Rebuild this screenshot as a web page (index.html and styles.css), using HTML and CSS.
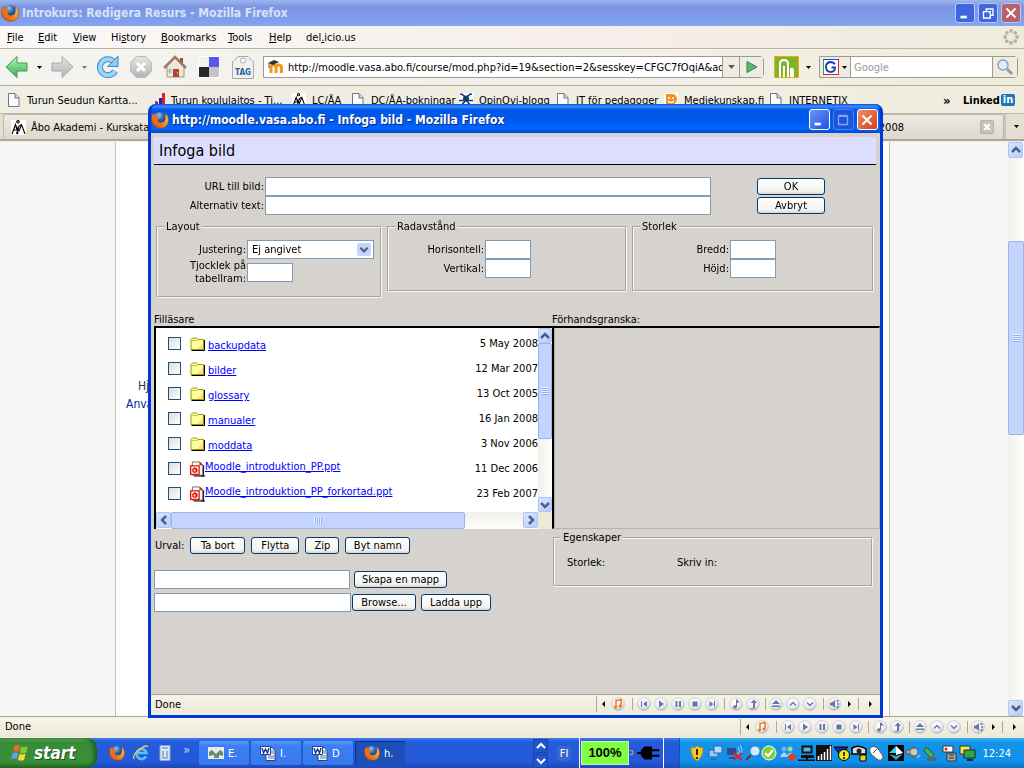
FILE: index.html
```html
<!DOCTYPE html>
<html lang="sv">
<head>
<meta charset="utf-8">
<title>Infoga bild</title>
<link rel="stylesheet" href="styles.css">
</head>
<body>
<svg class="defs" aria-hidden="true">
  <defs>
    <linearGradient id="gGreen" x1="0" y1="0" x2="0" y2="1"><stop offset="0" stop-color="#c9f2cf"/><stop offset=".5" stop-color="#6fd183"/><stop offset="1" stop-color="#3fae58"/></linearGradient>
    <linearGradient id="gGrey" x1="0" y1="0" x2="0" y2="1"><stop offset="0" stop-color="#e4e4e4"/><stop offset="1" stop-color="#b4b4b4"/></linearGradient>
    <radialGradient id="gBall" cx=".45" cy=".35" r=".65"><stop offset="0" stop-color="#fff"/><stop offset=".7" stop-color="#e9eaf0"/><stop offset="1" stop-color="#a9acb8"/></radialGradient>
    <radialGradient id="gGlobe" cx=".4" cy=".3" r=".8"><stop offset="0" stop-color="#8cc8f4"/><stop offset=".5" stop-color="#2c68b8"/><stop offset="1" stop-color="#123070"/></radialGradient>
    <linearGradient id="gFox" x1="1" y1="0" x2="0" y2="1"><stop offset="0" stop-color="#fbd850"/><stop offset=".5" stop-color="#f08820"/><stop offset="1" stop-color="#c84410"/></linearGradient>
  </defs>
  <symbol id="firefox" viewBox="0 0 16 16"><path d="M1 3Q.2 6 .6 9 2 15 8.500 15.500 15 15 15.600 8.500 15.700 4.500 12.500 1.500L13 4Q9 0 4 2.500Z" fill="url(#gFox)" stroke="#a84010" stroke-width=".5"/><circle cx="8" cy="5.800" r="5" fill="url(#gGlobe)"/><path d="M1 3 3 4Q5 3.500 6 5L8 6 6 7.500Q5.500 9 7 10 9 10.500 10.500 9.500 9.500 12.500 6 12 2 10.500 1.500 7Z" fill="#e8701c"/></symbol>
  <symbol id="page" viewBox="0 0 14 14"><path d="M1.500.5H8l4 4v9H1.500Z" fill="#fafcff" stroke="#6d7784"/><path d="M8 .5V5h4" fill="#cdd8e6" stroke="#6d7784"/></symbol>
  <symbol id="aa" viewBox="0 0 15 15"><path fill="#fff" d="M0 0h15v15H0z"/><g fill="none" stroke="#000" stroke-width="1.100"><circle cx="7" cy="1.800" r="1.200"/><path d="M1 14 4.500 4.500 7 14M5.500 14 8 6 10.500 4.500 14 14M4.500 5 8 11 10.500 5M2 10h3"/></g></symbol>
  <symbol id="ppt" viewBox="0 0 16 16"><path d="M2.500.5h8l3 3v11h-11Z" fill="#fff" stroke="#666"/><path d="M10 0v4h4Z" fill="#d02020"/><path d="M4 15.500h10.500V4M12 15.500h4" fill="none" stroke="#000"/><path d="M.7 4.700h9v9h-9Z" fill="#fff" stroke="#e01000" stroke-width="1.400"/><circle cx="5.200" cy="9.200" r="2.200" fill="none" stroke="#e01000" stroke-width="1.400"/><path d="M5.200 9.200V6.500M5.200 9.200h2.500" stroke="#e01000" fill="none"/></symbol>
  <symbol id="folder" viewBox="0 0 15 14"><path d="M1 12.500V2.500L2.500 1H6.500L8 2.500H13.500V12.500Z" fill="#ffff9c" stroke="#9a9a00"/><path d="M1.500 13.500H14.500V3" fill="none" stroke="#000"/><path d="M7 12 13 6v6Z" fill="#ffd08c" opacity=".8"/><path d="M2 3.500H8" stroke="#c8c860"/></symbol>
  <symbol id="word" viewBox="0 0 16 16"><path d="M6 2.500h6l3 3v10H6Z" fill="#fff" stroke="#345"/><path d="M11 6h3M11 8h3M8 11h6M8 13h6" stroke="#4a6cb0"/><path d="M.5 1.500h10v8H.5Z" fill="#fff" stroke="#2244a0"/><path d="m2 3 1.500 5 2-4 2 4L9 3" fill="none" stroke="#1a3890" stroke-width="1.400"/></symbol>
  <symbol id="up" viewBox="0 0 10 10"><path d="m1 7 4-4 4 4" fill="none" stroke="#4d6185" stroke-width="2.500"/></symbol>
  <symbol id="down" viewBox="0 0 10 10"><path d="m1 3 4 4 4-4" fill="none" stroke="#4d6185" stroke-width="2.500"/></symbol>
  <symbol id="left" viewBox="0 0 10 10"><path d="M7 1 3 5l4 4" fill="none" stroke="#4d6185" stroke-width="2.500"/></symbol>
  <symbol id="right" viewBox="0 0 10 10"><path d="m3 1 4 4-4 4" fill="none" stroke="#4d6185" stroke-width="2.500"/></symbol>
  <symbol id="tri" viewBox="0 0 5 3"><path d="M0 0h5L2.500 3Z" fill="#000"/></symbol>
  <symbol id="media" viewBox="0 0 280 18">
    <path d="M11 6v6L8 9ZM254 6v6l3-3ZM275 6v6l3-3Z"/>
    <path d="M2.500 1v16M38.500 3v12M130.500 3v12M171.500 3v12M229.500 3v12M264.500 3v12" stroke="#aca899"/>
    <g fill="url(#gBall)" stroke="#c4c4cc" stroke-width=".6"><circle cx="24" cy="9" r="6.500"/><circle cx="50" cy="9" r="6.500"/><circle cx="67" cy="9" r="6.500"/><circle cx="84" cy="9" r="6.500"/><circle cx="101" cy="9" r="6.500"/><circle cx="118" cy="9" r="6.500"/><circle cx="142" cy="9" r="6.500"/><circle cx="159" cy="9" r="6.500"/><circle cx="182" cy="9" r="6.500"/><circle cx="199" cy="9" r="6.500"/><circle cx="216" cy="9" r="6.500"/><circle cx="240" cy="9" r="6.500"/></g>
    <path d="M22 12V5.500l5-1V11" fill="none" stroke="#f07818" stroke-width="1.500"/><circle cx="21.500" cy="12" r="1.600" fill="#f07818"/><circle cx="26" cy="11" r="1.600" fill="#f07818"/>
    <g fill="#64789a"><path d="M47 6h1v6h-1ZM53 6v6l-4-3ZM65 5.500v7l5-3.500ZM81.500 6h2v6h-2ZM85 6h2v6h-2ZM98.500 6.500h5v5h-5ZM115.500 6v6l4-3ZM120 6h1v6h-1ZM142 4.500h1l3 3h-3V12h-1Z"/><circle cx="141" cy="12" r="1.800"/><path d="M156 13h3V8h-2.500L160 4.500 163 8h-2v5l-3 1ZM182 5l4 4h-8ZM178 10.500h8V12h-8ZM236 7.500h2l3-2.500v8l-3-2.500h-2Z"/></g>
    <path d="m196 10.500 3-3 3 3M213 7.500l3 3 3-3M242.500 6.500l2-1M243 9h2M242.500 11.500l2 1" fill="none" stroke="#64789a" stroke-width="1.400"/>
  </symbol>
</svg>

<div class="desktop">
  <section class="browser">
    <header class="titlebar titlebar-idle">
      <svg class="i18"><use href="#firefox"/></svg>
      <h1 class="title">Introkurs: Redigera Resurs - Mozilla Firefox</h1>
      <div class="win-buttons">
        <button class="wb" aria-label="Minimera"><svg viewBox="0 0 20 20"><path d="M5 14.500h7" stroke="#fff" stroke-width="3"/></svg></button>
        <button class="wb" aria-label="Återställ"><svg viewBox="0 0 20 20"><path d="M8 8V5.500h7.500v7H13M5 8.500h7.500v7H5Z" fill="none" stroke="#fff" stroke-width="1.500"/></svg></button>
        <button class="wb wb-close-idle" aria-label="Stäng"><svg viewBox="0 0 20 20"><path d="m5 5 10 10M15 5 5 15" stroke="#fff" stroke-width="2"/></svg></button>
      </div>
    </header>
    <nav class="menu">
      <a href="#"><u>F</u>ile</a><a href="#"><u>E</u>dit</a><a href="#"><u>V</u>iew</a><a href="#">Hi<u>s</u>tory</a><a href="#"><u>B</u>ookmarks</a><a href="#"><u>T</u>ools</a><a href="#"><u>H</u>elp</a><a href="#">del<u>.</u>icio.us</a>
      <svg class="throbber" viewBox="0 0 16 16"><g fill="#b4b2ae"><circle cx="8" cy="2" r="1.900"/><circle cx="12.200" cy="3.800" r="1.900"/><circle cx="14" cy="8" r="1.900"/><circle cx="12.200" cy="12.200" r="1.900"/><circle cx="8" cy="14" r="1.900"/><circle cx="3.800" cy="12.200" r="1.900"/><circle cx="2" cy="8" r="1.900"/><circle cx="3.800" cy="3.800" r="1.900"/></g></svg>
    </nav>
    <div class="tools">
      <button class="tool" aria-label="Back"><svg class="i24" viewBox="0 0 24 24"><path d="M1 12 12 1.500V8h10v8H12v6.500Z" fill="url(#gGreen)" stroke="#3c9c50"/></svg></button>
      <svg class="caret"><use href="#tri"/></svg>
      <button class="tool" aria-label="Forward"><svg class="i24" viewBox="0 0 24 24"><path d="M23 12 12 1.500V8H2v8h10v6.500Z" fill="url(#gGrey)" stroke="#aaa"/></svg></button>
      <svg class="caret faded"><use href="#tri"/></svg>
      <div class="toolset">
      <button class="tool" aria-label="Reload"><svg class="i24" viewBox="0 0 24 24"><path d="M20 16a8 8 0 1 1-2-10" fill="none" stroke="#3c8cc8" stroke-width="6"/><path d="M20 16a8 8 0 1 1-2-10" fill="none" stroke="#9cd4f8" stroke-width="4"/><path d="M23 1v10.500H12.500Z" fill="#8ccaf4" stroke="#3c8cc8"/></svg></button>
      <button class="tool" aria-label="Stop"><svg class="i24" viewBox="0 0 24 24"><path d="M7.500 1.500h9l6 6v9l-6 6h-9l-6-6v-9Z" fill="url(#gGrey)" stroke="#bbb"/><path d="m8 8 8 8m0-8-8 8" stroke="#fff" stroke-width="3"/></svg></button>
      <button class="tool" aria-label="Home"><svg class="i24" viewBox="0 0 24 24"><path d="M17 3h3v6h-3Z" fill="#9a5040"/><path d="M4 11v11h17V11L12 3Z" fill="#f2e6dc" stroke="#a89080"/><path d="M1 13 12 2l11 11" fill="none" stroke="#a07868" stroke-width="2.500"/><path d="M10 14h6v8h-6Z" fill="#a84838"/><path d="M5.500 14h3v4h-3Z" fill="#b0bcc8"/><circle cx="14.500" cy="18" r=".8" fill="#ffe000"/></svg></button>
      <button class="tool" aria-label="del.icio.us"><svg class="i24" viewBox="0 0 24 24"><path d="M1 1h22v22H1Z" fill="#fff"/><path d="M2 2h10v10H2Z" fill="#f2f2f2"/><path d="M12 2h10v10H12Z" fill="#5656f0"/><path d="M2 12h10v10H2Z" fill="#282828"/><path d="M12 12h10v10H12Z" fill="#c4c4c4"/></svg></button>
      <button class="tool tag" aria-label="Tag"><svg class="i24" viewBox="0 0 24 24"><path d="M1.500 23.500V7L7 1.500h10L22.500 7v16.500Z" fill="#f0f0f0" stroke="#aaa"/><circle cx="12" cy="5.500" r="2.500" fill="#fff" stroke="#aaa"/></svg><span>TAG</span></button>
      </div>
      <div class="urlbox">
        <svg class="i18" viewBox="0 0 18 18"><path d="M4 15V9q0-2 2.300-2T9 9v6M9 9q0-2 2.500-2T14.500 9v6" fill="none" stroke="#f5961e" stroke-width="3"/><path d="m1 5 6-3 5 2-6 3Z" fill="#333"/><path d="M2 5v5" stroke="#555"/></svg>
        <input class="field-plain" aria-label="Adress" value="http://moodle.vasa.abo.fi/course/mod.php?id=19&amp;section=2&amp;sesskey=CFGC7fOqiA&amp;add=resource">
        <button class="drop" aria-label="Visa adresser"><svg class="caret big"><use href="#tri"/></svg></button>
        <button class="go" aria-label="Go"><svg viewBox="0 0 14 14"><path d="M2 1.500 12 7 2 12.500Z" fill="#5cb870" stroke="#2c8444"/></svg></button>
      </div>
      <button class="tool" aria-label="Nätverk"><svg class="i25" viewBox="0 0 25 22"><path d="M.5.5h24v21H.5Z" fill="#82b428" stroke="#f5a81e"/><path d="M6 21V8q0-4 4-4t4 4v13M10 21V10M17 21v-8q2-1 2 2v6" fill="none" stroke="#fff" stroke-width="2"/></svg></button>
      <svg class="caret"><use href="#tri"/></svg>
      <div class="searchbox">
        <button class="engine" aria-label="Sökmotor"><svg viewBox="0 0 16 16"><path d="M0 0h16v16H0Z" fill="#fff"/><path d="M.5 0v16" stroke="#24a848"/><path d="M15.500 0v16M0 15.500h16" stroke="#e02828"/><path d="M0 .5h16" stroke="#2050c8"/><path d="M12 5Q10 3 7.500 3 3 3.500 3 8t4.500 5q4.500 0 4.500-4.500H8.500" fill="none" stroke="#2038b0" stroke-width="1.800"/></svg><svg class="caret"><use href="#tri"/></svg></button>
        <input class="field-plain" aria-label="Sök" placeholder="Google">
        <button class="mag" aria-label="Sök"><svg viewBox="0 0 18 18"><circle cx="7" cy="7" r="5" fill="#dcf0fa" stroke="#8aa4b8" stroke-width="1.500"/><path d="m11 11 5 5" stroke="#a8988c" stroke-width="3"/></svg></button>
      </div>
    </div>
    <nav class="bookmarks">
      <a href="#"><svg><use href="#page"/></svg>Turun Seudun Kartta...</a>
      <a href="#"><svg viewBox="0 0 14 14"><path d="M1 14v-2h2v2M4 14V8h2v6M11 14V0h3v14" fill="#e02020"/><path d="M6 14V9h1v5M8 14V5h3v9" fill="#1828c0"/></svg>Turun koululaitos - Ti...</a>
      <a href="#"><svg><use href="#aa"/></svg>LC/ÅA</a>
      <a href="#"><svg><use href="#page"/></svg>DC/ÅA-bokningar</a>
      <a href="#"><svg viewBox="0 0 14 14"><path d="M0 0h14v14H0Z" fill="#fff"/><circle cx="7" cy="5.500" r="3" fill="#123c70"/><path d="M1 1q4 0 6 5 2-5 6-5M2 13l5-6 5 6M0 7.500h14" fill="none" stroke="#123c70" stroke-width="1.600"/></svg>OpinOvi-blogg</a>
      <a href="#"><svg><use href="#page"/></svg>IT för pedagoger</a>
      <a href="#"><svg viewBox="0 0 14 14"><path d="M0 0h14v14H0Z" fill="#fff"/><path d="M2 1h7q4 1 4 5t-5 6l-6 1Z" fill="#f39022"/><path d="M4 8q3 3 6 0" fill="none" stroke="#fff" stroke-width="1.500"/><path d="M5 4v2M9 4v2" stroke="#fff" stroke-width="1.500"/></svg>Mediekunskap.fi</a>
      <a href="#"><svg><use href="#page"/></svg>INTERNETIX</a>
      <b class="more">»</b>
      <a class="linkedin" href="#"><b>Linked</b><i>in</i></a>
    </nav>
    <div class="tabs">
      <button class="tab"><svg><use href="#aa"/></svg>Åbo Akademi - Kurskatalog</button>
      <button class="tab tab-last"><span>2008</span><svg class="tab-close" viewBox="0 0 13 13"><rect x=".5" y=".5" width="12" height="12" rx="2" fill="#c8c4bc" stroke="#b4b0a6"/><path d="m4 4 5 5m0-5L4 9" stroke="#fff" stroke-width="2"/></svg></button>
      <button class="tab-list" aria-label="Flikar"><svg class="caret"><use href="#tri"/></svg></button>
    </div>
    <main class="content">
      <div class="side"></div>
      <div class="doc"><p>Hjälp</p><p><a href="#">Användare</a></p></div>
      <div class="side side-right"></div>
      <div class="vbar">
        <button class="sb" aria-label="Upp"><svg><use href="#up"/></svg></button>
        <div class="track-main"><div class="thumb"><span class="grip"></span></div></div>
        <button class="sb" aria-label="Ned"><svg><use href="#down"/></svg></button>
      </div>
    </main>
    <footer class="status"><span>Done</span><svg class="media"><use href="#media"/></svg></footer>
  </section>

  <section class="dialog">
    <header class="titlebar titlebar-active">
      <svg class="i18"><use href="#firefox"/></svg>
      <h2 class="title">http://moodle.vasa.abo.fi - Infoga bild - Mozilla Firefox</h2>
      <div class="win-buttons">
        <button class="wb wb-active" aria-label="Minimera"><svg viewBox="0 0 20 20"><path d="M5 14.500h7" stroke="#fff" stroke-width="3"/></svg></button>
        <button class="wb wb-off" aria-label="Maximera"><svg viewBox="0 0 20 20"><path d="M5 6h10v9H5ZM5 5h10" fill="none" stroke="#86a4f0" stroke-width="1.500"/></svg></button>
        <button class="wb wb-close" aria-label="Stäng"><svg viewBox="0 0 20 20"><path d="m5 5 10 10M15 5 5 15" stroke="#fff" stroke-width="2.400"/></svg></button>
      </div>
    </header>
    <div class="dialog-body">
      <h3 class="heading">Infoga bild</h3>
      <form class="main-form">
        <label for="url">URL till bild:</label><input class="box" id="url" autofocus><button class="btn" type="button">OK</button>
        <label for="alt">Alternativ text:</label><input class="box" id="alt"><button class="btn" type="button">Avbryt</button>
      </form>
      <div class="groups">
        <fieldset class="group group-tall">
          <legend>Layout</legend>
          <div class="pairs">
            <label for="just">Justering:</label>
            <span class="select"><select id="just"><option>Ej angivet</option></select><svg><use href="#down"/></svg></span>
            <label class="two-line" for="border">Tjocklek på tabellram:</label><input class="box small" id="border">
          </div>
        </fieldset>
        <fieldset class="group">
          <legend>Radavstånd</legend>
          <div class="pairs">
            <label for="hs">Horisontell:</label><input class="box small" id="hs">
            <label for="vs">Vertikal:</label><input class="box small" id="vs">
          </div>
        </fieldset>
        <fieldset class="group">
          <legend>Storlek</legend>
          <div class="pairs">
            <label for="w">Bredd:</label><input class="box small" id="w">
            <label for="h">Höjd:</label><input class="box small" id="h">
          </div>
        </fieldset>
      </div>
      <div class="panes">
        <span>Filläsare</span><span>Förhandsgranska:</span>
        <div class="files">
          <table class="file-table">
            <tr><td><input type="checkbox" aria-label="backupdata"></td><td class="name"><svg><use href="#folder"/></svg><a href="#">backupdata</a></td><td class="date">5 May 2008</td></tr>
            <tr><td><input type="checkbox" aria-label="bilder"></td><td class="name"><svg><use href="#folder"/></svg><a href="#">bilder</a></td><td class="date">12 Mar 2007</td></tr>
            <tr><td><input type="checkbox" aria-label="glossary"></td><td class="name"><svg><use href="#folder"/></svg><a href="#">glossary</a></td><td class="date">13 Oct 2005</td></tr>
            <tr><td><input type="checkbox" aria-label="manualer"></td><td class="name"><svg><use href="#folder"/></svg><a href="#">manualer</a></td><td class="date">16 Jan 2008</td></tr>
            <tr><td><input type="checkbox" aria-label="moddata"></td><td class="name"><svg><use href="#folder"/></svg><a href="#">moddata</a></td><td class="date">3 Nov 2006</td></tr>
            <tr><td><input type="checkbox" aria-label="Moodle_introduktion_PP.ppt"></td><td class="name ppt"><svg><use href="#ppt"/></svg><a href="#">Moodle_introduktion_PP.ppt</a></td><td class="date">11 Dec 2006</td></tr>
            <tr><td><input type="checkbox" aria-label="Moodle_introduktion_PP_forkortad.ppt"></td><td class="name ppt"><svg><use href="#ppt"/></svg><a href="#">Moodle_introduktion_PP_forkortad.ppt</a></td><td class="date">23 Feb 2007</td></tr>
          </table>
          <div class="vbar vbar-files">
            <button class="sb" aria-label="Upp"><svg><use href="#up"/></svg></button>
            <div class="track"><div class="thumb thumb-v"><span class="grip"></span></div></div>
            <button class="sb" aria-label="Ned"><svg><use href="#down"/></svg></button>
          </div>
          <div class="hbar">
            <button class="sb" aria-label="Vänster"><svg><use href="#left"/></svg></button>
            <div class="htrack"><div class="thumb thumb-h"><span class="grip grip-h"></span></div></div>
            <button class="sb" aria-label="Höger"><svg><use href="#right"/></svg></button>
          </div>
          <div class="corner"></div>
        </div>
        <div class="preview"></div>
      </div>
      <div class="lower">
        <div class="actions">
          <div class="row row-sel"><span>Urval:</span><button class="btn b55">Ta bort</button><button class="btn b48">Flytta</button><button class="btn b34">Zip</button><button class="btn b65">Byt namn</button></div>
          <div class="row row-make"><input class="box" aria-label="Mappnamn"><button class="btn b93">Skapa en mapp</button></div>
          <div class="row row-up"><input class="box" aria-label="Fil"><button class="btn b64">Browse...</button><button class="btn b70">Ladda upp</button></div>
        </div>
        <fieldset class="group props">
          <legend>Egenskaper</legend>
          <div class="prop-row"><span>Storlek:</span><span>Skriv in:</span></div>
        </fieldset>
      </div>
    </div>
    <footer class="status dialog-status"><span>Done</span><svg class="media"><use href="#media"/></svg></footer>
  </section>

  <footer class="taskbar">
    <button class="start"><svg viewBox="0 0 18 18"><path d="M4 2.500q2.500-1.500 5 0L7.700 8q-2.500-1.500-5 0Z" fill="#f06830"/><path d="M10 3q2.500 1.500 6 0L14.500 8.500q-3 1.500-5.500 0Z" fill="#84cc30"/><path d="M2.400 9.200q2.500-1.500 5 0L6 14.500q-2.500-1.500-5 0Z" fill="#68a0f8"/><path d="M8.500 9.700q2.500 1.500 5.500 0L12.700 15q-3 1.500-5.500 0Z" fill="#fcd838"/></svg><span>start</span></button>
    <div class="quick">
      <svg><use href="#firefox"/></svg>
      <svg viewBox="0 0 16 16"><path d="M13 11.500A5 5 0 1 1 13.500 8H5" fill="none" stroke="#5cc0f8" stroke-width="2.600"/><path d="M1 14Q-1 10 7 4q7-5 8-2" fill="none" stroke="#f0d060" stroke-width="1.300"/></svg>
      <svg viewBox="0 0 16 16"><path d="M3 .5h10v15H3Z" fill="#dce8f8" stroke="#88a8d0"/><path d="M5 3h6M5 7h2M9 7h2M5 9h2M9 9h2M5 11h2M9 11h2M5 13h6" stroke="#4878b8"/></svg>
      <span>»</span>
    </div>
    <div class="tasks">
      <button class="task"><svg viewBox="0 0 16 16"><path d="M0 2h16v12H0Z" fill="#e8ece8"/><path d="M1 11V7l3-2 4 4 4-4 3 2v4l-4-1v3H6v-3Z" fill="#6c8878"/></svg>E.</button>
      <button class="task"><svg><use href="#word"/></svg>I.</button>
      <button class="task"><svg><use href="#word"/></svg>D</button>
      <button class="task task-on"><svg><use href="#firefox"/></svg>h.</button>
    </div>
    <div class="task-scroll"><button aria-label="Föregående"><svg viewBox="0 0 10 10"><path d="m1 7 4-4 4 4" fill="none" stroke="#fff" stroke-width="2"/></svg></button><button aria-label="Nästa"><svg viewBox="0 0 10 10"><path d="m1 3 4 4 4-4" fill="none" stroke="#fff" stroke-width="2"/></svg></button></div>
    <span class="lang">FI</span>
    <div class="battery"><b>100%</b><svg viewBox="0 0 36 20"><path d="M1 7.500h3v4H1" fill="none" stroke="#b8b8a8"/><path d="M9 10h5M24 7h9M24 13h9" stroke="#000" stroke-width="2"/><path d="M13 7l4-4h8v14h-8l-4-4Z" fill="#000"/></svg></div>
    <div class="tray">
      <svg class="tray-icons" viewBox="0 0 288 18">
        <path d="M2 4q5 0 6-2 2 2 6 2 0 9-6 13Q2 13 2 4Z" fill="#fcc820" stroke="#c89000"/><path d="M8 5v6M8 13v2" stroke="#222" stroke-width="2"/>
        <g stroke="#3060b0"><path d="M20 6h9v7h-9Z" fill="#90c8f8"/><path d="M25 2h8v7h-8Z" fill="#b0dcff"/><path d="M22 15.500h6"/></g>
        <path d="M38 4h9v7h-9ZM40 13h6v2h-6Z" fill="#34488c"/><path d="M49 3q3 4 0 8M51 1q4 6 0 11" fill="none" stroke="#b8d0f0"/><path d="m45 9 8 7m0-7-8 7" stroke="#e02020" stroke-width="2"/>
        <circle cx="66" cy="7" r="5" fill="#d0ecff" stroke="#5878a8"/><path d="m62 11-5 5" stroke="#603820" stroke-width="2"/>
        <circle cx="80" cy="9" r="7" fill="#84cc38" stroke="#fff"/><path d="m76 9 3 3 5-6" fill="none" stroke="#fff" stroke-width="2"/>
        <circle cx="95" cy="5" r="2.500" fill="#70b0f0"/><circle cx="101" cy="5" r="2.500" fill="#a0d8a0"/><path d="M91 13q4-9 8 0ZM98 12q3-7 7 0Z" fill="#a8d4f8"/><circle cx="103" cy="13" r="3.500" fill="#e04020"/>
        <path d="M113.500 2.500h9v6h-9Z" fill="#50b8d8" stroke="#111" stroke-width="2"/><path d="M112 11h13v3h-13ZM117 14h2v2h-2ZM109 15.500h17v1.500h-17Z" fill="#111"/>
        <path d="M127 1h16v16h-16Z" fill="#101010"/><path d="M129.500 16v-4M132.500 16v-6M135.500 16V8M138.500 16V5M141.500 16V2" stroke="#fff" stroke-width="1.500"/>
        <path d="M145 3h14l-7 9Z" fill="#1828a0" stroke="#000"/><circle cx="155" cy="11" r="5.500" fill="#f8e820" stroke="#000"/><path d="M155 8v4M155 13v2" stroke="#000" stroke-width="1.500"/>
        <path d="M163 4q7-4 14 1v5h-14Z" fill="#ddd" stroke="#000" stroke-width="1.500"/><circle cx="170" cy="7" r="2.500" fill="#222"/><path d="M171 11h6v6h-6Z" fill="#e8d820" stroke="#000"/>
        <path d="M181 4q4-4 9 2l4 6q0 5-5 4l-7-6q-2-3-1-6Z" fill="#fff" stroke="#555"/><path d="m184 9 5-5" stroke="#555"/>
        <path d="M199 1h16v16h-16Z" fill="#000"/><path d="m207 2 7 7h-14Z" fill="#38d0e8"/><path d="m207 2 7 7-7 2Z" fill="#fff"/><path d="m200 10 7 6 7-6-7 2Z" fill="#28a8c8"/>
        <path d="M217 6h3l5-4v12l-5-4h-3Z" fill="#aaa" stroke="#555"/><circle cx="225" cy="8" r="4" fill="#c8c8c8" stroke="#666"/><path d="m228 14 3-3" stroke="#88b0e8" stroke-width="2"/>
        <path d="m237 3 8 7-3 4-7-7Z" fill="#48b058" stroke="#186828"/><path d="M238 13h9v4h-9Z" fill="#566"/>
        <path d="M254 2h10v6h-10Z" fill="#fff" stroke="#333"/><circle cx="257" cy="5" r="1.500" fill="#e02020"/><path d="M258 9h9v8h-9Z" fill="#aaa" stroke="#333"/><path d="M260 11h5M260 14h5" stroke="#222"/>
        <path d="M271 2h10v8h-10Z" fill="#f0e850" stroke="#333"/><path d="M275 6h11v8h-11Z" fill="#30a848" stroke="#222"/><path d="M278 16h6" stroke="#222" stroke-width="2"/>
      </svg>
      <time>12:24</time>
    </div>
  </footer>
</div>
</body>
</html>
```

FILE: styles.css
```css
* { box-sizing: border-box; }
html, body { height: 100%; margin: 0; }
body { font: 11px/13px "DejaVu Sans Condensed", "Noto Sans", sans-serif; color: #000; overflow: hidden; }
button, input, select { font: inherit; color: inherit; margin: 0; padding: 0; }
button { border: 0; background: none; }
svg { display: block; flex: none; }
a { color: inherit; text-decoration: none; }
h1, h2, h3, p { margin: 0; }
.defs { position: absolute; width: 0; height: 0; }
.desktop { position: relative; height: 100vh; display: flex; flex-direction: column; }
.browser { flex: 1; min-height: 0; display: flex; flex-direction: column; background: #f2f0e6; }

/* title bars */
.titlebar { flex: none; display: flex; align-items: center; color: #fff; }
.titlebar-idle { height: 26px; padding: 0 3px 0 1px; background: linear-gradient(#9db6ef, #7b96e2 25%, #7f9ce8 70%, #86a6f0); color: #d8e2fa; }
.titlebar-active { height: 29px; padding: 2px 2px 0 0; background: linear-gradient(#0a52d8, #3c8cff 8%, #0058e8 20%, #0058ee 60%, #0066ff 85%, #0048d0); border-radius: 7px 7px 0 0; text-shadow: 1px 1px 0 #0a2a80; }
.title { flex: 1; margin-left: 3px; font: bold 12px/16px "DejaVu Sans Condensed", sans-serif; white-space: nowrap; }
.i18 { width: 18px; height: 18px; }
.win-buttons { display: flex; gap: 3px; }
.wb { width: 20px; height: 20px; border: 1px solid #b8c8f4; border-radius: 3px; background: #3f66dc; }
.wb svg { width: 18px; height: 18px; }
.wb-close-idle { background: #b8606c; }
.dialog .wb { width: 21px; height: 21px; border-color: #fff; background: linear-gradient(135deg, #6c96f8, #2050e0); }
.dialog .wb-off { border-color: #4c80ee; background: #1c54e0; }
.dialog .wb-close { background: linear-gradient(135deg, #f09070, #d83c10); }

/* menu and toolbars */
.menu { flex: none; height: 23px; padding: 0 5px 0 7px; display: grid; grid-template-columns: 31px 35px 38px 50px 67px 41px 37px 1fr 16px; align-items: center; background: linear-gradient(90deg, #faf9f7, #f6eeea 60%, #eeebdd); border-bottom: 1px solid #b8b5a4; }
.throbber { width: 16px; height: 16px; }
.tools { flex: none; height: 37px; padding: 0 6px 0 5px; display: flex; align-items: center; background: linear-gradient(90deg, #f4f3ef, #f4f0ea 60%, #efecda); border-bottom: 1px solid #aeab98; }
.tool { position: relative; width: 24px; height: 24px; }
.i24 { width: 24px; height: 24px; }
.i25 { width: 25px; height: 22px; }
.caret { width: 5px; height: 3px; margin: 0 8px; }
.faded { opacity: .5; }
.toolset { display: flex; gap: 10px; margin: 0 8px 0 0; }
.tag span { position: absolute; left: 0; right: 0; bottom: 1px; font: bold 8px/10px "DejaVu Sans Condensed", sans-serif; color: #2860a0; text-align: center; }
.urlbox, .searchbox { display: flex; align-items: center; height: 22px; border: 1px solid #9c9a94; background: #fff; border-radius: 0 4px 4px 0; }
.urlbox { flex: 1; min-width: 0; margin-right: 10px; padding-left: 3px; }
.field-plain { flex: 1; min-width: 0; border: 0; outline: 0; background: transparent; }
.field-plain::placeholder { color: #999; opacity: 1; }
.urlbox .field-plain { margin-left: 3px; }
.searchbox { width: 199px; }
.drop, .go, .engine, .mag { height: 20px; background: #efece4; border-left: 1px solid #9c9a94; display: flex; align-items: center; justify-content: center; }
.drop { width: 17px; }
.go { width: 24px; }
.go svg { width: 14px; height: 14px; }
.big { width: 7px; height: 4px; opacity: .6; }
.engine { width: 31px; border-left: 0; border-right: 1px solid #9c9a94; }
.engine svg { width: 16px; height: 16px; }
.engine .caret { width: 5px; height: 3px; margin: 0 0 0 3px; }
.searchbox .field-plain { margin-left: 3px; }
.mag { width: 25px; }
.mag svg { width: 18px; height: 18px; }
.bookmarks { flex: none; height: 27px; padding: 1px 8px 0 7px; display: grid; grid-template-columns: 144px 141px 59px 108px 97px 108px 105px 1fr 20px 53px; align-items: center; white-space: nowrap; background: linear-gradient(90deg, #efede4, #f0ede0); }
.bookmarks > a { display: flex; align-items: center; gap: 6px; }
.bookmarks svg { width: 14px; height: 14px; }
.more { font-size: 13px; }
.bookmarks .linkedin { gap: 0; }
.linkedin i { margin-left: 1px; padding: 0 2px; font: bold 11px/12px "DejaVu Sans Condensed", sans-serif; color: #fff; background: #1c78b8; border-radius: 2px; }
.tabs { flex: none; height: 28px; padding-left: 3px; display: grid; grid-template-columns: 1fr 1fr 20px; background: #e3dfd3; border-top: 1px solid #bcb8a8; border-bottom: 2px solid #aca899; }
.tab { display: flex; align-items: center; gap: 5px; padding-left: 7px; border: 1px solid #bcb8aa; border-bottom: 0; border-radius: 3px 3px 0 0; background: linear-gradient(#eeeae2, #dcd7cb); white-space: nowrap; }
.tab svg { width: 15px; height: 15px; }
.tab-last { justify-content: flex-end; padding-right: 9px; gap: 76px; }
.tab .tab-close { width: 14px; height: 14px; }
.tab-list { border-left: 2px solid #c8c4b6; }

/* page behind the dialog */
.content { flex: 1; min-height: 0; display: grid; grid-template-columns: 116px 1fr 119px 16px; border-top: 1px solid #f4f0e8; background: #fff; }
.side { background: #f6f6f6; border-right: 1px solid #c4c0b4; }
.side-right { border-right: 0; border-left: 1px solid #c4c0b4; }
.doc { padding: 235px 0 0 10px; font: 12px/18px "DejaVu Sans Condensed", sans-serif; color: #333; }
.doc p:first-child { padding-left: 12px; }
.doc a { color: #0028a0; }

/* scrollbars */
.vbar { display: flex; flex-direction: column; background: linear-gradient(90deg, #f2f0e8, #fefefe); }
.sb { flex: none; width: 15px; height: 16px; display: grid; place-items: center; border: 1px solid #b0c4f4; border-radius: 2px; background: linear-gradient(135deg, #dce6ff, #b4ccfc); }
.sb svg { width: 10px; height: 10px; }
.track-main { flex: 1; display: grid; grid-template-rows: 83fr 194fr 265fr; }
.track-main .thumb { grid-row: 2; }
.thumb { display: grid; place-items: center; border: 1px solid #98b4f0; border-radius: 2px; background: #c4d4fd; }
.grip { width: 7px; height: 8px; background: repeating-linear-gradient(#eef4ff 0 1px, #8cb0f8 1px 2px); }
.grip-h { width: 8px; height: 6px; background: repeating-linear-gradient(90deg, #eef4ff 0 1px, #8cb0f8 1px 2px); }
.vbar-files .sb { width: 14px; height: 15px; }
.track { flex: 1; display: grid; grid-template-rows: 96fr 58fr; }
.hbar { display: flex; background: linear-gradient(#f2f0e8, #fefefe); }
.htrack { flex: 1; display: grid; grid-template-columns: 292fr 58fr; }

/* status bars */
.status { flex: none; height: 22px; padding: 0 6px 2px 5px; display: flex; align-items: center; justify-content: space-between; border-top: 1px solid #a8a596; background: linear-gradient(#f6f3ea, #ece9d8); }
.media { width: 280px; height: 18px; }

/* dialog */
.dialog { position: absolute; left: 148px; right: 141px; top: 104px; bottom: 50px; display: flex; flex-direction: column; border: solid #0038d8; border-width: 0 3px 3px; border-radius: 8px 8px 0 0; background: #0038d8; }
.dialog-body { flex: 1; min-height: 0; padding: 4px 0 0 3px; background: #d6d3ce; }
.dialog-status { height: 21px; padding-left: 4px; }
.heading { height: 28px; margin-right: 4px; padding: 5px 0 0 5px; font: 16px/18px "DejaVu Sans Condensed", sans-serif; background: #ddddff; border-bottom: 1px solid #000; }
.main-form { margin: 12px 4px 0 0; display: grid; grid-template-columns: 110px 1fr 68px; column-gap: 1px; align-items: center; padding-right: 51px; }
.main-form label { text-align: right; }
.main-form .btn { width: 68px; }
.main-form .box { width: auto; margin-right: 45px; }
.box { min-width: 0; height: 19px; padding: 0 2px; border: 1px solid #7f9db9; border-radius: 0; outline: 0; background: #fff; }
.btn { height: 17px; border: 1px solid #003c74; border-radius: 3px; background: linear-gradient(#fff, #f4f3ee 80%, #dcd6cc); line-height: 15px; text-align: center; white-space: nowrap; }
.groups { margin: 5px 6px 0 2px; display: grid; grid-template-columns: 226fr 240fr 242fr; column-gap: 5px; align-items: start; }
.group { min-width: 0; height: 72px; margin: 0; padding: 0; border: 2px groove #f8f6ee; }
.group-tall { height: 78px; }
.group legend { margin-left: 6px; padding: 0 2px; line-height: 13px; }
.pairs { padding-top: 7px; display: grid; grid-template-columns: 95px 1fr; column-gap: 1px; align-items: center; }
.group-tall .pairs { grid-template-columns: 88px 1fr; }
.pairs label { text-align: right; }
.two-line { padding-left: 30px; }
.small { width: 46px; }
.select { position: relative; height: 19px; margin-right: 6px; }
.select select { width: 100%; height: 19px; padding-left: 4px; appearance: none; border: 1px solid #7f9db9; border-radius: 0; background: #fff; }
.select svg { position: absolute; right: 3px; top: 3px; width: 14px; height: 13px; padding: 2px; background: #c4d4fd; border-radius: 2px; pointer-events: none; }
.panes { margin-top: 16px; display: grid; grid-template-columns: 398fr 328fr; grid-template-rows: 12px 203px; line-height: 12px; }
.files { min-width: 0; display: grid; grid-template-columns: 1fr 14px; grid-template-rows: 1fr 17px; border: solid #000; border-width: 2px 0 0 2px; background: #fff; line-height: 13px; }
.file-table { width: 100%; height: 175px; margin-top: 3px; border-collapse: collapse; table-layout: fixed; }
.file-table td { padding: 0; height: 25px; }
.file-table td:first-child { width: 34px; padding-left: 12px; }
.file-table input { display: block; width: 13px; height: 13px; appearance: none; border: 1px solid #1c5180; background: linear-gradient(135deg, #dcdcd7, #fff); }
.name { display: flex; align-items: center; gap: 3px; white-space: nowrap; }
.name svg { width: 15px; height: 14px; }
.name a { padding-top: 4px; color: #0000ff; text-decoration: underline; }
.ppt { gap: 0; }
.ppt svg { width: 15px; height: 16px; }
.ppt a { padding: 0 0 4px; }
.file-table .date { width: 70px; text-align: right; }
.corner { background: #ece9d8; }
.preview { border: solid #000; border-width: 2px 1px 1px 2px; border-right-color: #b5b2ad; border-bottom-color: #b5b2ad; box-shadow: inset 1px 0 #b5b2ad; }
.lower { margin-right: 7px; display: grid; grid-template-columns: 399fr 320fr; align-items: start; }
.actions { padding-top: 8px; }
.row { display: flex; align-items: center; }
.row-sel { padding-left: 1px; gap: 6px; margin-bottom: 16px; }
.row-make { gap: 4px; margin-bottom: 4px; }
.row-make .box { width: 196px; }
.row-up { gap: 1px; }
.row-up .box { width: 197px; }
.b34 { width: 34px; } .b48 { width: 48px; } .b55 { width: 55px; } .b64 { width: 64px; } .b65 { width: 65px; } .b70 { width: 70px; margin-left: 4px; } .b93 { width: 93px; }
.props { height: 56px; margin-top: 2px; }
.prop-row { padding: 12px; display: grid; grid-template-columns: 110px 1fr; }

/* taskbar */
.taskbar { flex: none; height: 30px; display: flex; align-items: center; color: #fff; background: linear-gradient(#3c80e8, #245cdc 12%, #2458d8 80%, #1c48b8); }
.start { width: 97px; height: 30px; padding-left: 10px; display: flex; align-items: center; gap: 4px; border-radius: 0 10px 10px 0; background: linear-gradient(#60b060, #388c38 15%, #389038 80%, #246c24); box-shadow: inset -3px 0 4px #1c5c1c; }
.start svg { width: 20px; height: 20px; }
.start span { font: italic bold 17px/22px "DejaVu Sans Condensed", sans-serif; text-shadow: 1px 1px 1px #1c4c1c; }
.quick { width: 102px; padding-left: 12px; display: flex; gap: 8px; }
.quick svg { width: 16px; height: 16px; }
.quick span { margin-left: 2px; font-size: 13px; line-height: 10px; color: #b8d4fc; }
.tasks { flex: 1; display: flex; gap: 2px; }
.task { width: 50px; height: 24px; padding-left: 9px; display: flex; align-items: center; gap: 4px; border-radius: 2px; background: linear-gradient(#5c98fc, #3c80f4 20%, #3878ec); }
.task svg { width: 16px; height: 16px; }
.task-on { background: #1c50b8; box-shadow: inset 1px 1px 1px #0c3088; }
.task-scroll { width: 15px; margin-right: 9px; display: grid; gap: 1px; }
.task-scroll button { height: 14px; display: grid; place-items: center; background: #2454cc; border: 1px solid #1c44a8; }
.task-scroll svg { width: 10px; height: 10px; }
.lang { width: 14px; padding: 1px 0; background: #3468cc; text-align: center; }
.battery { height: 30px; width: 85px; margin: 0 15px 0 8px; display: flex; align-items: center; border: solid #fff; border-width: 0 1px; padding-left: 1px; }
.battery b { width: 48px; font: bold 13px/22px "Liberation Sans", sans-serif; color: #000; background: #80ff40; border: 1px solid #d8e8c8; text-align: center; }
.battery svg { width: 33px; height: 20px; }
.tray { width: 345px; height: 30px; padding: 0 13px 0 9px; display: flex; align-items: center; justify-content: space-between; border-left: 1px solid #0c54b0; background: linear-gradient(#38b0f4, #1494e8 15%, #1090e8 80%, #0c70c0); }
.tray-icons { width: 288px; height: 18px; }
```
